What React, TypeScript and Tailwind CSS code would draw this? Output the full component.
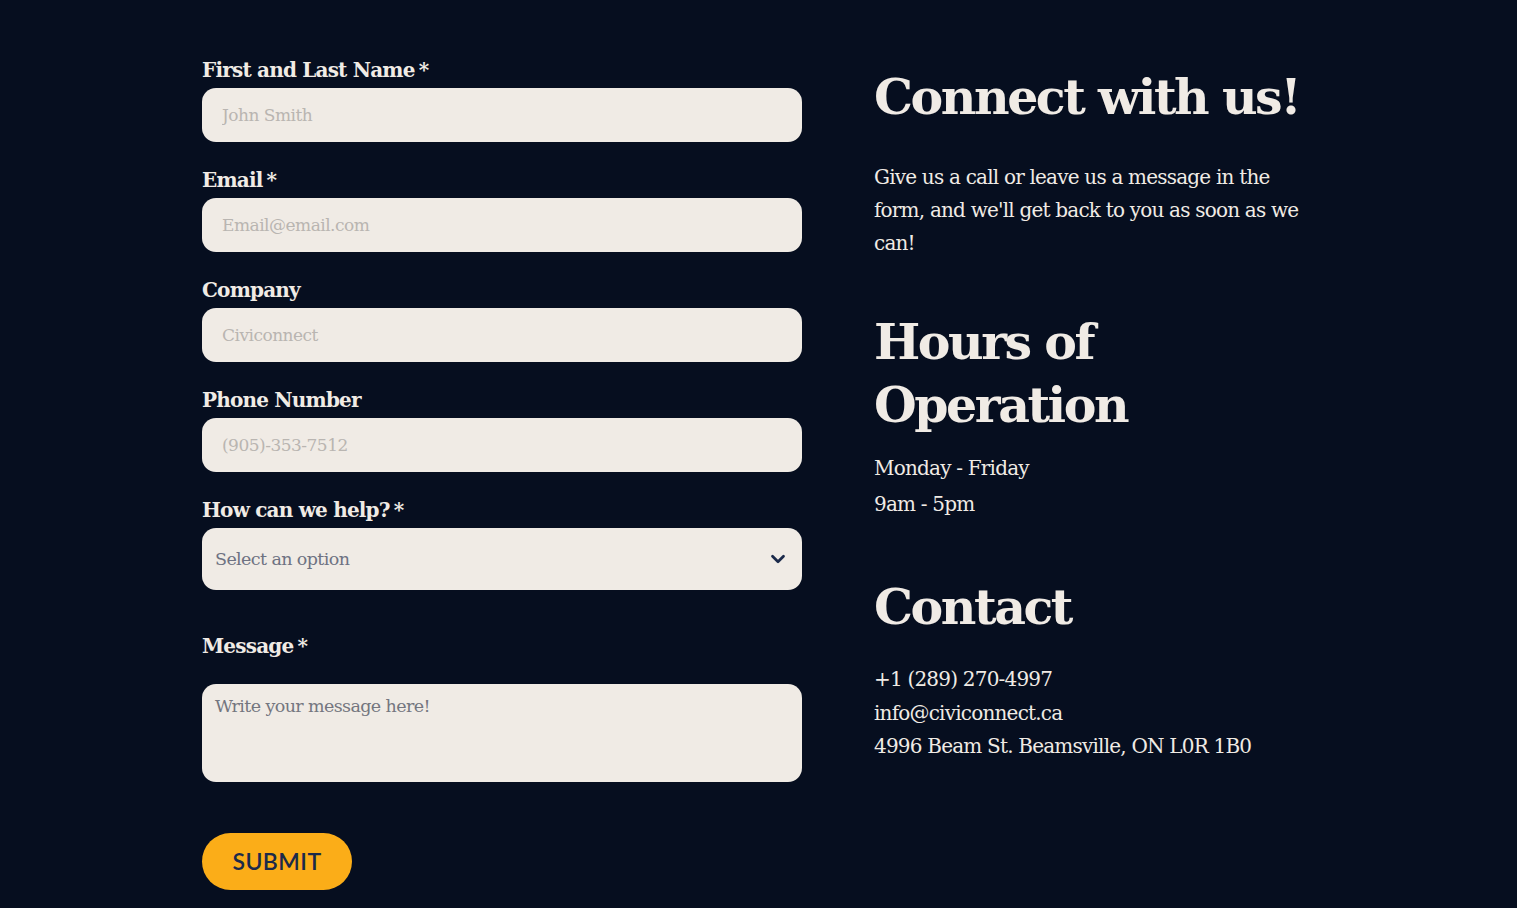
import {ChevronDown} from 'lucide-react';

const serif = {fontFamily: '"DejaVu Serif", "Liberation Serif", serif'};

function Label({children, required}: {children: React.ReactNode, required?: boolean}) {
    return (
        <label className="block text-[20px] leading-6 font-bold tracking-[-0.04em] text-[#f0ebe5]">
            {children}{required && <span className="ml-1">*</span>}
        </label>
    );
}

export default function App() {
    const inputCls = "block w-full h-[54px] rounded-[14px] bg-[#f0ebe5] px-5 text-[17px] tracking-[-0.03em] text-gray-800 placeholder:text-[#b9b5b1] outline-none border-0";

    return (
        <div className="min-h-[908px] bg-[#060e1f]" style={serif}>
            <div className="mx-auto flex w-[1113px] gap-[72px] pt-[58px]">
                <form className="w-[600px] shrink-0">
                    <div className="flex flex-col gap-[26px]">
                        <div className="flex flex-col gap-[6px]">
                            <Label required>First and Last Name</Label>
                            <input className={inputCls} placeholder="John Smith"/>
                        </div>
                        <div className="flex flex-col gap-[6px]">
                            <Label required>Email</Label>
                            <input className={inputCls} placeholder="Email@email.com"/>
                        </div>
                        <div className="flex flex-col gap-[6px]">
                            <Label>Company</Label>
                            <input className={inputCls} placeholder="Civiconnect"/>
                        </div>
                        <div className="flex flex-col gap-[6px]">
                            <Label>Phone Number</Label>
                            <input className={inputCls} placeholder="(905)-353-7512"/>
                        </div>
                        <div className="flex flex-col gap-[6px]">
                            <Label required>How can we help?</Label>
                            <div className="relative">
                                <div
                                    className="flex h-[62px] w-full items-center justify-between rounded-[14px] bg-[#f0ebe5] px-[13px] text-[17.5px] tracking-[-0.035em] text-[#6e7282]">
                                    <span>Select an option</span>
                                    <ChevronDown className="h-[22px] w-[22px] text-[#1b2a4a]" strokeWidth={3}/>
                                </div>
                            </div>
                        </div>
                    </div>
                    <div className="mt-[44px] flex flex-col gap-[26px]">
                        <Label required>Message</Label>
                        <textarea
                            className="block h-[98px] w-full resize-none rounded-[14px] bg-[#f0ebe5] px-[13px] pt-[9px] text-[17.5px] tracking-[-0.035em] text-gray-800 placeholder:text-[#74767f] outline-none"
                            placeholder="Write your message here!"/>
                    </div>
                    <button type="button"
                            className="mt-[51px] h-[57px] w-[150px] rounded-full bg-[#fbad18] text-[23px] font-semibold tracking-[0.02em] text-[#1b2a4a]"
                            style={{fontFamily: 'Lato, "Open Sans", sans-serif'}}>
                        SUBMIT
                    </button>
                </form>

                <div className="w-[441px] text-[#f0ebe5]">
                    <h1 className="mt-[8px] text-[49px] leading-[62px] font-bold tracking-[-0.05em]">Connect with us!</h1>
                    <p className="mt-[33px] text-[20px] leading-[33px] tracking-[-0.04em]">
                        Give us a call or leave us a message in the form, and we'll get back to you as soon as we can!
                    </p>
                    <h2 className="mt-[51px] text-[49px] leading-[63px] font-bold tracking-[-0.05em]">Hours of Operation</h2>
                    <div className="mt-[13px] text-[20px] leading-[36px] tracking-[-0.04em]">
                        <p>Monday - Friday</p>
                        <p>9am - 5pm</p>
                    </div>
                    <h2 className="mt-[54px] text-[49px] leading-[62px] font-bold tracking-[-0.05em]">Contact</h2>
                    <div className="mt-[25px] text-[20px] leading-[33.5px] tracking-[-0.04em]">
                        <p>+1 (289) 270-4997</p>
                        <p>info@civiconnect.ca</p>
                        <p>4996 Beam St. Beamsville, ON L0R 1B0</p>
                    </div>
                </div>
            </div>
        </div>
    );
}
